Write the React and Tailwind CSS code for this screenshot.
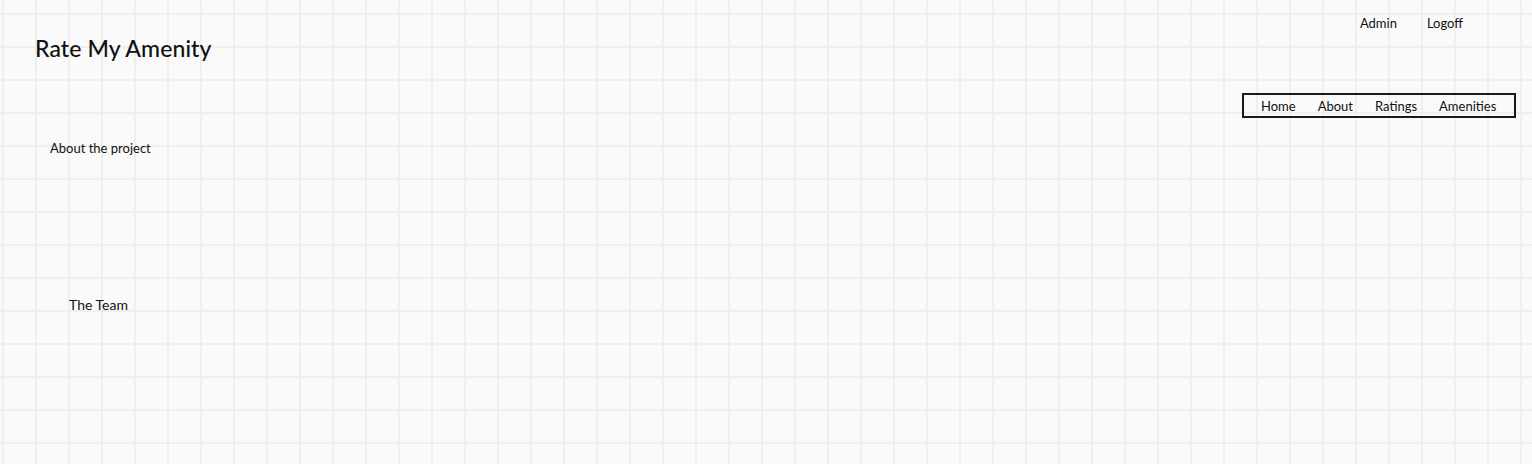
const navItems = ["Home", "About", "Ratings", "Amenities"];

const App = () => {
  return (
    <div className="relative h-[464px] w-full overflow-hidden bg-[#fafafa] bg-[linear-gradient(to_right,#efefef_2px,transparent_2px),linear-gradient(to_bottom,#efefef_2px,transparent_2px)] bg-[size:33px_33px] bg-[position:2px_13px] font-['Lato','Noto_Sans',sans-serif] text-[#111]">
      <header className="flex justify-between">
        <h1 className="pl-[35px] pt-[34px] text-[23px] font-medium leading-[28px] tracking-[0.1px]">
          Rate My Amenity
        </h1>

        <div className="flex flex-col items-end pr-[16px]">
          <div className="flex gap-[30px] pr-[53px] pt-[15px] text-[13px] leading-[16px]">
            <span>Admin</span>
            <span>Logoff</span>
          </div>

          <nav className="mt-[62px] flex h-[25px] w-[274px] items-center gap-[22px] border-2 border-[#1a1a1a] pl-[17px] text-[13px] leading-[16px]">
            {navItems.map(item => (
              <span key={item}>{item}</span>
            ))}
          </nav>
        </div>
      </header>

      <main className="text-[13px] leading-[16px]">
        <h2 className="pl-[50px] pt-[22px]">About the project</h2>
        <h2 className="pl-[69px] pt-[141px] text-[14px]">The Team</h2>
      </main>
    </div>
  );
};

export default App;
